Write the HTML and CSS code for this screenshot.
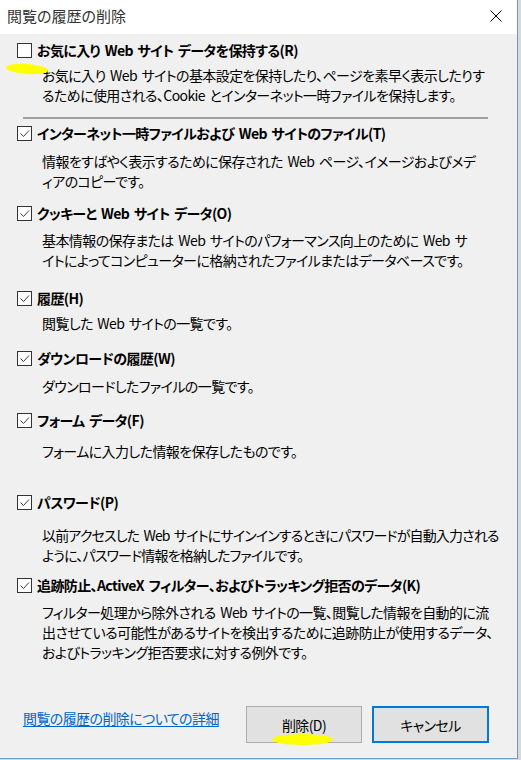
FILE: index.html
```html
<!DOCTYPE html>
<html lang="ja">
<head>
<meta charset="utf-8">
<title>閲覧の履歴の削除</title>
<link rel="stylesheet" href="styles.css">
</head>
<body>
<div class="window">
  <div class="titlebar">
    <span class="title">閲覧の履歴の削除</span>
    <svg class="close" width="12" height="12" viewBox="0 0 12 12"><path d="M0.5 0.5L11.5 11.5M11.5 0.5L0.5 11.5" stroke="#000" stroke-width="1" fill="none"/></svg>
  </div>
  <div class="content">
    <div class="list">
      <div class="item">
        <div class="label"><span class="cb"></span><span>お気に入り Web サイト データを保持する(R)</span></div>
        <div class="desc d5">お気に入り Web サイトの基本設定を保持したり、ページを素早く表示したりす<br>るために使用される、Cookie とインターネット一時ファイルを保持します。</div>
      </div>
      <div class="sep"></div>
      <div class="item">
        <div class="label"><span class="cb checked"><svg viewBox="0 0 13 13" width="13" height="13"><path d="M2.5 6.5L5.5 9.5L11 3.5" stroke="#3a3a3a" stroke-width="1" fill="none"/></svg></span><span>インターネット一時ファイルおよび Web サイトのファイル(T)</span></div>
        <div class="desc d8">情報をすばやく表示するために保存された Web ページ、イメージおよびメデ<br>ィアのコピーです。</div>
      </div>
      <div class="item g12">
        <div class="label"><span class="cb checked"><svg viewBox="0 0 13 13" width="13" height="13"><path d="M2.5 6.5L5.5 9.5L11 3.5" stroke="#3a3a3a" stroke-width="1" fill="none"/></svg></span><span>クッキーと Web サイト データ(O)</span></div>
        <div class="desc d7">基本情報の保存または Web サイトのパフォーマンス向上のために Web サ<br>イトによってコンピューターに格納されたファイルまたはデータベースです。</div>
      </div>
      <div class="item g18">
        <div class="label"><span class="cb checked"><svg viewBox="0 0 13 13" width="13" height="13"><path d="M2.5 6.5L5.5 9.5L11 3.5" stroke="#3a3a3a" stroke-width="1" fill="none"/></svg></span><span>履歴(H)</span></div>
        <div class="desc d5">閲覧した Web サイトの一覧です。</div>
      </div>
      <div class="item g15">
        <div class="label"><span class="cb checked"><svg viewBox="0 0 13 13" width="13" height="13"><path d="M2.5 6.5L5.5 9.5L11 3.5" stroke="#3a3a3a" stroke-width="1" fill="none"/></svg></span><span>ダウンロードの履歴(W)</span></div>
        <div class="desc d8">ダウンロードしたファイルの一覧です。</div>
      </div>
      <div class="item g14">
        <div class="label"><span class="cb checked"><svg viewBox="0 0 13 13" width="13" height="13"><path d="M2.5 6.5L5.5 9.5L11 3.5" stroke="#3a3a3a" stroke-width="1" fill="none"/></svg></span><span>フォーム データ(F)</span></div>
        <div class="desc d11">フォームに入力した情報を保存したものです。</div>
      </div>
      <div class="item g31">
        <div class="label"><span class="cb checked"><svg viewBox="0 0 13 13" width="13" height="13"><path d="M2.5 6.5L5.5 9.5L11 3.5" stroke="#3a3a3a" stroke-width="1" fill="none"/></svg></span><span>パスワード(P)</span></div>
        <div class="desc d13 tight">以前アクセスした Web サイトにサインインするときにパスワードが自動入力される<br>ように、パスワード情報を格納したファイルです。</div>
      </div>
      <div class="item g10">
        <div class="label"><span class="cb checked"><svg viewBox="0 0 13 13" width="13" height="13"><path d="M2.5 6.5L5.5 9.5L11 3.5" stroke="#3a3a3a" stroke-width="1" fill="none"/></svg></span><span>追跡防止、ActiveX フィルター、およびトラッキング拒否のデータ(K)</span></div>
        <div class="desc d7">フィルター処理から除外される Web サイトの一覧、閲覧した情報を自動的に流<br>出させている可能性があるサイトを検出するために追跡防止が使用するデータ、<br>およびトラッキング拒否要求に対する例外です。</div>
      </div>
    </div>
    <div class="footer">
      <a class="link" href="#">閲覧の履歴の削除についての詳細</a>
      <div class="buttons">
        <button class="btn">削除(D)</button>
        <button class="btn default">キャンセル</button>
      </div>
    </div>
  </div>
  <span class="mark mark-a"></span>
  <span class="mark mark-b"></span>
</div>
</body>
</html>
```

FILE: styles.css
```css
html, body {
  margin: 0;
  padding: 0;
}
body {
  background: #d9d9d9;
  font-family: "Noto Sans CJK JP", "Noto Sans", sans-serif;
  font-feature-settings: "palt";
  font-size: 14px;
  letter-spacing: -0.6px;
  word-spacing: 2px;
  color: #000;
  width: 521px;
  height: 760px;
  overflow: hidden;
}
.window {
  position: relative;
  width: 517px;
  height: 758px;
  border-right: 1px solid #6d98c8;
  border-bottom: 1px solid #6fa0d6;
  display: flex;
  flex-direction: column;
}
.titlebar {
  height: 34px;
  background: #fff;
  display: flex;
  align-items: center;
  justify-content: space-between;
  padding: 0 15px 0 7px;
  flex: none;
}
.title {
  font-size: 15px;
  letter-spacing: 0;
  color: #333;
  line-height: 20px;
  margin-top: -3px;
}
.close {
  display: block;
  margin-top: -3px;
}
.content {
  flex: 1;
  background: #f0f0f0;
  padding: 6px 0 15px 0;
  display: flex;
  flex-direction: column;
}
.item {
  padding-left: 17px;
}
.label {
  display: flex;
  align-items: center;
  gap: 5px;
  height: 20px;
  line-height: 20px;
  font-weight: 700;
  white-space: nowrap;
}
.cb {
  width: 15px;
  height: 15px;
  box-sizing: border-box;
  border: 1px solid #333;
  background: #fff;
  flex: none;
  display: flex;
  align-items: center;
  justify-content: center;
}
.cb svg {
  display: block;
}
.desc {
  margin-left: 25px;
  line-height: 20px;
  white-space: nowrap;
}
.tight {
  letter-spacing: -0.85px;
}
.d5 { margin-top: 5px; }
.d7 { margin-top: 7px; }
.d8 { margin-top: 8px; }
.d11 { margin-top: 11px; }
.d13 { margin-top: 13px; }
.g10 { margin-top: 10px; }
.g12 { margin-top: 12px; }
.g14 { margin-top: 14px; }
.g15 { margin-top: 15px; }
.g18 { margin-top: 18px; }
.g31 { margin-top: 31px; }
.sep {
  height: 2px;
  background: #a0a0a0;
  margin: 12px 29px 4px 23px;
}
.footer {
  margin-top: auto;
  display: flex;
  align-items: flex-start;
  padding: 0 28px 0 23px;
  height: 37px;
}
.link {
  color: #0066cc;
  text-decoration: underline;
  text-underline-offset: 2px;
  line-height: 20px;
  margin-top: 2px;
  white-space: nowrap;
}
.buttons {
  margin-left: auto;
  display: flex;
  gap: 10px;
}
.btn {
  font-family: inherit;
  font-feature-settings: "palt";
  font-size: 14px;
  letter-spacing: -0.6px;
  color: #000;
  background: #e1e1e1;
  border: 1px solid #adadad;
  width: 116px;
  height: 37px;
  padding: 0;
  margin: 0;
  line-height: 20px;
}
.btn.default {
  width: 117px;
  border: 2px solid #0078d7;
}
.mark {
  position: absolute;
  background: #ffff00;
  border-radius: 50%;
}
.mark-a {
  left: 6px;
  top: 64px;
  width: 42px;
  height: 10px;
  transform: rotate(4deg);
}
.mark-b {
  left: 272px;
  top: 734px;
  width: 61px;
  height: 11px;
}
```
